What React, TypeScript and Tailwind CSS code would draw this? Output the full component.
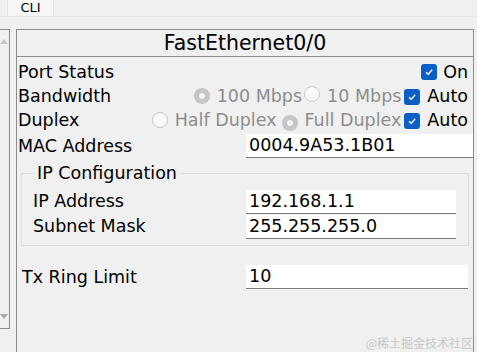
import React from "react";

const Checkbox = () => (
  <span className="inline-flex h-[16px] w-[16px] items-center justify-center rounded-[3px] bg-[#0a5fc6]">
    <svg width="10" height="10" viewBox="0 0 10 10">
      <path d="M2 5.2 L4.2 7.3 L8.2 2.8" fill="none" stroke="#fff" strokeWidth="1.3" />
    </svg>
  </span>
);

const Radio = ({ checked }: { checked?: boolean }) =>
  checked ? (
    <span className="inline-flex h-[16px] w-[16px] items-center justify-center rounded-full bg-[#c6c6c6]">
      <span className="h-[6px] w-[6px] rounded-full bg-[#f2f2f2]" />
    </span>
  ) : (
    <span className="inline-flex h-[16px] w-[16px] rounded-full border border-[#c9c9c9] bg-[#f9f9f9]" />
  );

const Field = ({ value, className }: { value: string; className: string }) => (
  <div className={`flex h-[24px] items-center border-b border-[#7a7a7a] bg-white pl-[3px] text-black ${className}`}>
    {value}
  </div>
);

const App = () => {
  return (
    <div className="h-[352px] w-[477px] overflow-hidden bg-[#f0f0f0] text-[17.5px] text-black [font-family:'DejaVu_Sans',Verdana,sans-serif]">
      <div className="flex h-[17px] border-b border-[#e6e6e6]">
        <div className="ml-[7px] flex w-[47px] items-center justify-center border-x border-[#e3e3e3] bg-[#f7f7f7] text-[13px]">
          CLI
        </div>
      </div>
      <div className="mt-[12px] flex">
        <div className="flex h-[300px] w-[10px] flex-col justify-between border-y border-r border-[#8c8c8c] py-[8px]">
          <svg width="8" height="6" viewBox="0 0 8 6">
            <path d="M0 6 L4 1 L8 6 Z" fill="#c8c8c8" />
          </svg>
          <svg width="8" height="6" viewBox="0 0 8 6">
            <path d="M0 0 L8 0 L4 5 Z" fill="#a8a8a8" />
          </svg>
        </div>
        <div className="relative ml-[6px] h-[323px] w-[458px] border-x border-t border-[#8c8c8c]">
          <div className="flex h-[27px] items-center justify-center border-b border-[#8c8c8c] text-[20.5px]">
            FastEthernet0/0
          </div>
          <div className="pl-[1px] pr-[5px] pt-[1px]">
            <div className="flex h-[26px] items-center justify-between pt-[2px]">
              <span>Port Status</span>
              <span className="flex items-center gap-[6px]">
                <Checkbox />
                On
              </span>
            </div>
            <div className="flex h-[24px] items-center justify-between">
              <span>Bandwidth</span>
              <span className="flex items-center">
                <Radio checked />
                <span className="ml-[7px] text-[#8d8d8d]">100 Mbps</span>
                <span className="ml-[2px]"><Radio /></span>
                <span className="ml-[7px] text-[#8d8d8d]">10 Mbps</span>
                <span className="ml-[3px]"><Checkbox /></span>
                <span className="ml-[7px]">Auto</span>
              </span>
            </div>
            <div className="flex h-[24px] items-center justify-between">
              <span>Duplex</span>
              <span className="flex items-center">
                <Radio />
                <span className="ml-[7px] text-[#8d8d8d]">Half Duplex</span>
                <span className="ml-[5px]"><Radio checked /></span>
                <span className="ml-[7px] text-[#8d8d8d]">Full Duplex</span>
                <span className="ml-[3px]"><Checkbox /></span>
                <span className="ml-[7px]">Auto</span>
              </span>
            </div>
          </div>
          <div className="mt-[2px] flex h-[24px] items-center justify-between pl-[1px]">
            <span>MAC Address</span>
            <Field value="0004.9A53.1B01" className="w-[227px]" />
          </div>
          <fieldset className="mx-[4px] mt-[5px] border border-[#dcdcdc] px-[11px] pb-[6px]">
            <legend className="px-[4px] leading-[20px]">IP Configuration</legend>
            <div className="mt-[6px] flex h-[25px] items-center justify-between">
              <span>IP Address</span>
              <Field value="192.168.1.1" className="mr-[1px] w-[210px]" />
            </div>
            <div className="flex h-[25px] items-center justify-between">
              <span>Subnet Mask</span>
              <Field value="255.255.255.0" className="mr-[1px] w-[210px]" />
            </div>
          </fieldset>
          <div className="mt-[19px] flex h-[24px] items-center justify-between pl-[5px] pr-[5px]">
            <span>Tx Ring Limit</span>
            <Field value="10" className="w-[222px]" />
          </div>
          <div className="absolute bottom-[1px] right-0 text-[12px] leading-[16px] text-[#c8c8c8] [font-family:'Noto_Sans_CJK_SC',sans-serif]">
            @稀土掘金技术社区
          </div>
        </div>
      </div>
    </div>
  );
};

export default App;
